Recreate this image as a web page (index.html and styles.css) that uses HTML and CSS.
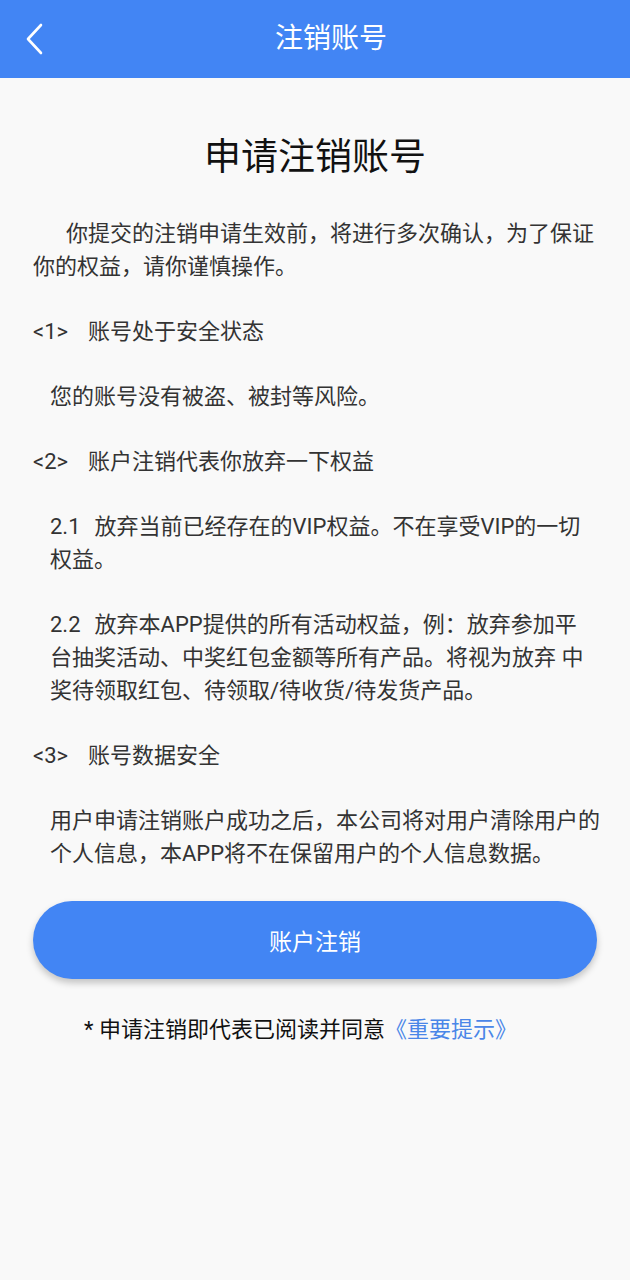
FILE: index.html
```html
<!DOCTYPE html>
<html lang="zh-CN">
<head>
<meta charset="utf-8">
<title>注销账号</title>
<link rel="stylesheet" href="styles.css">
</head>
<body>
<header class="topbar">
  <span class="back">
    <svg width="20" height="32" viewBox="0 0 20 32"><polyline points="16,2 3,16 16,30" fill="none" stroke="#fff" stroke-width="2.6" stroke-linecap="round" stroke-linejoin="round"/></svg>
  </span>
  <h1 class="topbar-title">注销账号</h1>
</header>
<main class="content">
  <h2 class="title">申请注销账号</h2>
  <div class="blocks">
    <p class="intro">你提交的注销申请生效前，将进行多次确认，为了保证<br>你的权益，请你谨慎操作。</p>
    <p class="head"><span class="num">&lt;1&gt;</span>账号处于安全状态</p>
    <p class="sub">您的账号没有被盗、被封等风险。</p>
    <p class="head"><span class="num">&lt;2&gt;</span>账户注销代表你放弃一下权益</p>
    <p class="sub"><span class="snum">2.1</span>放弃当前已经存在的VIP权益。不在享受VIP的一切<br>权益。</p>
    <p class="sub"><span class="snum">2.2</span>放弃本APP提供的所有活动权益，例：放弃参加平<br>台抽奖活动、中奖红包金额等所有产品。将视为放弃 中<br>奖待领取红包、待领取/待收货/待发货产品。</p>
    <p class="head"><span class="num">&lt;3&gt;</span>账号数据安全</p>
    <p class="sub">用户申请注销账户成功之后，本公司将对用户清除用户的<br>个人信息，本APP将不在保留用户的个人信息数据。</p>
  </div>
  <button class="btn">账户注销</button>
  <p class="note">* 申请注销即代表已阅读并同意<span class="link">《重要提示》</span></p>
</main>
</body>
</html>
```
FILE: styles.css
```css
* { box-sizing: border-box; }
html, body {
  margin: 0;
  padding: 0;
  background: #f9f9f9;
  font-family: Roboto, "Noto Sans CJK SC", sans-serif;
}
.topbar {
  height: 78px;
  background: #4285f4;
  display: flex;
  align-items: center;
  justify-content: center;
  position: relative;
}
.back {
  position: absolute;
  left: 25px;
  top: 23px;
  width: 20px;
  height: 32px;
  display: flex;
}
.topbar-title {
  margin: 0 0 0 32px;
  color: #fff;
  font-size: 28px;
  font-weight: 400;
  line-height: 1;
}
.content {
  padding: 0 33px;
}
.title {
  margin: 55px 0 0;
  text-align: center;
  font-size: 37px;
  font-weight: 400;
  color: #111;
  line-height: 50px;
}
.blocks {
  margin-top: 34px;
  display: flex;
  flex-direction: column;
  gap: 32px;
}
.blocks p {
  margin: 0;
  font-size: 22px;
  line-height: 33px;
  color: #333;
  white-space: nowrap;
}
.intro {
  text-indent: 33px;
}
.sub {
  padding-left: 17px;
}
.num {
  display: inline-block;
  margin-right: 20px;
}
.snum {
  display: inline-block;
  margin-right: 14px;
}
.btn {
  display: flex;
  align-items: center;
  justify-content: center;
  width: 100%;
  height: 78px;
  margin-top: 31px;
  border: none;
  border-radius: 39px;
  background: #4285f4;
  color: #fff;
  font-family: inherit;
  font-size: 23px;
  box-shadow: 0 4px 7px rgba(0, 0, 0, 0.22);
}
.note {
  margin: 36px 0 0;
  padding-left: 51px;
  font-size: 22px;
  line-height: 30px;
  color: #111;
}
.link {
  color: #4a86e8;
}
```
